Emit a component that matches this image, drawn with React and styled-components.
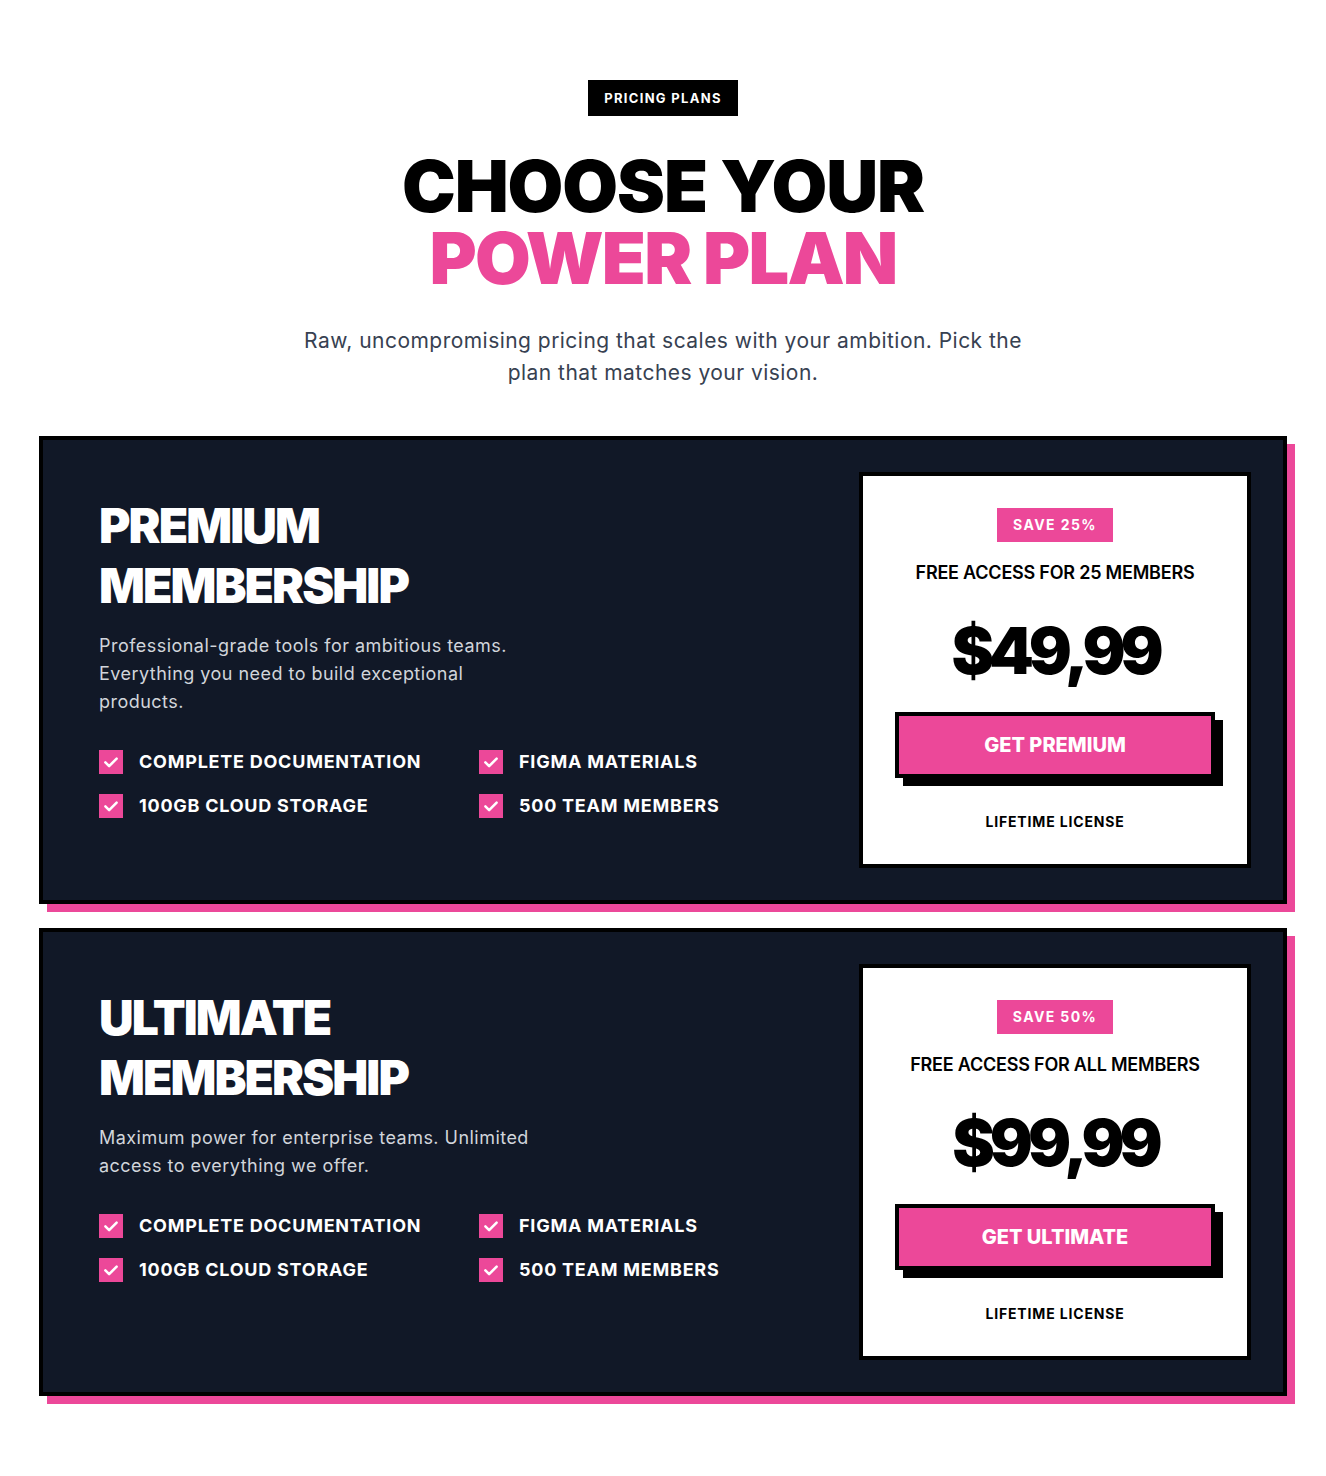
import React from "react";
import styled, { createGlobalStyle } from "styled-components";

const Global = createGlobalStyle`
  * { box-sizing: border-box; }
  html, body { margin: 0; padding: 0; background: #ffffff; }
  body { font-family: Inter, "Noto Sans", "Liberation Sans", sans-serif; color: #000; -webkit-font-smoothing: antialiased; }
`;

const PINK = "#ec4899";

const Page = styled.section`
  padding: 80px 39px 72px;
  display: flex;
  flex-direction: column;
  align-items: center;
`;

const Header = styled.header`
  display: flex;
  flex-direction: column;
  align-items: center;
  text-align: center;
`;

const Eyebrow = styled.span`
  display: inline-block;
  background: #000;
  color: #fff;
  font-size: 13px;
  font-weight: 700;
  letter-spacing: 0.1em;
  line-height: 20px;
  padding: 8px 16px;
  text-transform: uppercase;
`;

const Heading = styled.h1`
  margin: 34px 0 0;
  font-size: 72px;
  line-height: 72px;
  font-weight: 900;
  letter-spacing: -0.015em;
  text-transform: uppercase;
  color: #000;
`;

const Accent = styled.span`
  display: block;
  color: ${PINK};
  letter-spacing: -0.025em;
`;

const Lead = styled.p`
  margin: 31px 0 0;
  max-width: 768px;
  font-size: 21px;
  line-height: 32px;
  letter-spacing: 0.022em;
  color: #374151;
`;

const Plans = styled.div`
  margin-top: 47px;
  width: 100%;
  max-width: 1248px;
  display: flex;
  flex-direction: column;
  gap: 24px;
`;

const Card = styled.article`
  background: #111827;
  border: 4px solid #000;
  box-shadow: 8px 8px 0 ${PINK};
  padding: 32px;
  display: grid;
  grid-template-columns: 2fr 1fr;
`;

const Info = styled.div`
  padding: 24px;
  color: #fff;
`;

const PlanTitle = styled.h2`
  margin: 0;
  font-size: 48px;
  line-height: 60px;
  font-weight: 900;
  letter-spacing: -0.04em;
  text-transform: uppercase;
  color: #fff;
  max-width: 380px;
`;

const Desc = styled.p`
  margin: 16px 0 0;
  max-width: 440px;
  font-size: 18px;
  line-height: 28px;
  letter-spacing: 0.026em;
  color: #d1d5db;
`;

const Features = styled.ul`
  list-style: none;
  margin: 32px 0 0;
  padding: 0;
  display: grid;
  grid-template-columns: 1fr 1fr;
  column-gap: 24px;
  row-gap: 16px;
`;

const Feature = styled.li`
  display: flex;
  align-items: center;
  gap: 16px;
  font-size: 18px;
  line-height: 28px;
  font-weight: 700;
  letter-spacing: 0.042em;
  text-transform: uppercase;
  color: #fff;
`;

const Check = styled.span`
  width: 24px;
  height: 24px;
  flex: none;
  background: ${PINK};
  display: flex;
  align-items: center;
  justify-content: center;
`;

const PriceBox = styled.div`
  background: #fff;
  border: 4px solid #000;
  padding: 32px;
  display: flex;
  flex-direction: column;
  align-items: center;
  justify-content: center;
  text-align: center;
`;

const SaveTag = styled.span`
  background: ${PINK};
  color: #fff;
  font-size: 14px;
  font-weight: 700;
  letter-spacing: 0.1em;
  line-height: 18px;
  padding: 8px 16px;
  text-transform: uppercase;
`;

const Access = styled.p`
  margin: 17px 0 0;
  font-size: 18px;
  line-height: 28px;
  font-weight: 600;
  letter-spacing: -0.012em;
  text-transform: uppercase;
  color: #000;
`;

const Price = styled.div`
  margin-top: 32px;
  font-size: 64px;
  line-height: 64px;
  font-weight: 900;
  letter-spacing: -0.08em;
  color: #000;
`;

const BuyButton = styled.button`
  margin-top: 29px;
  width: 100%;
  height: 66px;
  background: ${PINK};
  border: 4px solid #000;
  box-shadow: 8px 8px 0 #000;
  color: #fff;
  font-family: inherit;
  font-size: 20px;
  font-weight: 800;
  text-transform: uppercase;
  cursor: pointer;
`;

const License = styled.p`
  margin: 34px 0 0;
  font-size: 14px;
  line-height: 20px;
  font-weight: 700;
  letter-spacing: 0.06em;
  text-transform: uppercase;
  color: #000;
`;

const CheckIcon = () => (
  <svg width="18" height="18" viewBox="0 0 24 24" fill="none" stroke="#fff" strokeWidth="3.4" strokeLinecap="round" strokeLinejoin="round">
    <path d="M4.5 12.5l5 5 10-10" />
  </svg>
);

const features = [
  "Complete Documentation",
  "Figma Materials",
  "100GB Cloud Storage",
  "500 Team Members",
];

const plans = [
  {
    title: "Premium Membership",
    desc: "Professional-grade tools for ambitious teams. Everything you need to build exceptional products.",
    save: "Save 25%",
    access: "Free access for 25 members",
    price: "$49,99",
    cta: "Get Premium",
  },
  {
    title: "Ultimate Membership",
    desc: "Maximum power for enterprise teams. Unlimited access to everything we offer.",
    save: "Save 50%",
    access: "Free access for all members",
    price: "$99,99",
    cta: "Get Ultimate",
  },
];

export default function App() {
  return (
    <>
      <Global />
      <Page>
        <Header>
          <Eyebrow>Pricing Plans</Eyebrow>
          <Heading>
            Choose your
            <Accent>Power Plan</Accent>
          </Heading>
          <Lead>
            Raw, uncompromising pricing that scales with your ambition. Pick the plan that matches your vision.
          </Lead>
        </Header>
        <Plans>
          {plans.map((p) => (
            <Card key={p.title}>
              <Info>
                <PlanTitle>{p.title}</PlanTitle>
                <Desc>{p.desc}</Desc>
                <Features>
                  {features.map((f) => (
                    <Feature key={f}>
                      <Check>
                        <CheckIcon />
                      </Check>
                      {f}
                    </Feature>
                  ))}
                </Features>
              </Info>
              <PriceBox>
                <SaveTag>{p.save}</SaveTag>
                <Access>{p.access}</Access>
                <Price>{p.price}</Price>
                <BuyButton>{p.cta}</BuyButton>
                <License>Lifetime License</License>
              </PriceBox>
            </Card>
          ))}
        </Plans>
      </Page>
    </>
  );
}
